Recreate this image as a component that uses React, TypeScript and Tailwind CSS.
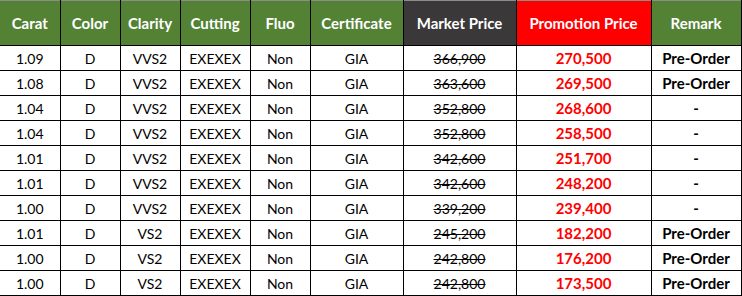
const rows = [
  { carat: '1.09', clarity: 'VVS2', market: '366,900', promo: '270,500', remark: 'Pre-Order' },
  { carat: '1.08', clarity: 'VVS2', market: '363,600', promo: '269,500', remark: 'Pre-Order' },
  { carat: '1.04', clarity: 'VVS2', market: '352,800', promo: '268,600', remark: '-' },
  { carat: '1.04', clarity: 'VVS2', market: '352,800', promo: '258,500', remark: '-' },
  { carat: '1.01', clarity: 'VVS2', market: '342,600', promo: '251,700', remark: '-' },
  { carat: '1.01', clarity: 'VVS2', market: '342,600', promo: '248,200', remark: '-' },
  { carat: '1.00', clarity: 'VVS2', market: '339,200', promo: '239,400', remark: '-' },
  { carat: '1.01', clarity: 'VS2', market: '245,200', promo: '182,200', remark: 'Pre-Order' },
  { carat: '1.00', clarity: 'VS2', market: '242,800', promo: '176,200', remark: 'Pre-Order' },
  { carat: '1.00', clarity: 'VS2', market: '242,800', promo: '173,500', remark: 'Pre-Order' },
]

const td = 'border border-black h-[25px] p-0 text-center'

export default function App() {
  return (
    <div className="w-[742px] h-[296px] bg-white font-['Lato','Liberation_Sans',sans-serif] text-[14px] text-black">
      <table className="border-collapse table-fixed w-[741px]">
        <colgroup>
          <col className="w-[60px]" />
          <col className="w-[60px]" />
          <col className="w-[60px]" />
          <col className="w-[70px]" />
          <col className="w-[60px]" />
          <col className="w-[93px]" />
          <col className="w-[113px]" />
          <col className="w-[135px]" />
          <col className="w-[90px]" />
        </colgroup>
        <thead>
          {/* header row */}
          <tr className="h-[45px] text-white font-bold text-[15px]">
            <th className="bg-[#548235] border-t border-t-[#8c8c8c] border-r border-r-black">Carat</th>
            <th className="bg-[#548235] border-t border-t-[#8c8c8c] border-x border-x-black">Color</th>
            <th className="bg-[#548235] border-t border-t-[#8c8c8c] border-x border-x-black">Clarity</th>
            <th className="bg-[#548235] border-t border-t-[#8c8c8c] border-x border-x-black">Cutting</th>
            <th className="bg-[#548235] border-t border-t-[#8c8c8c] border-x border-x-black">Fluo</th>
            <th className="bg-[#548235] border-t border-t-[#8c8c8c] border-x border-x-black">Certificate</th>
            <th className="bg-[#3a3838] border-t border-t-[#8c8c8c] border-x border-x-black">Market Price</th>
            <th className="bg-[#ff0000] border-t border-t-[#8c8c8c] border-x border-x-black">Promotion Price</th>
            <th className="bg-[#548235] border-t border-t-[#8c8c8c] border-x border-x-black">Remark</th>
          </tr>
        </thead>
        <tbody>
          {rows.map((r, i) => (
            <tr key={i}>
              <td className={td + ' border-l-0'}>{r.carat}</td>
              <td className={td}>D</td>
              <td className={td}>{r.clarity}</td>
              <td className={td}>EXEXEX</td>
              <td className={td}>Non</td>
              <td className={td}>GIA</td>
              <td className={td + ' line-through'}>{r.market}</td>
              <td className={td + ' text-[#ff0000] font-bold text-[15px]'}>{r.promo}</td>
              <td className={td + ' font-bold text-[15px]'}>{r.remark}</td>
            </tr>
          ))}
        </tbody>
      </table>
    </div>
  )
}
